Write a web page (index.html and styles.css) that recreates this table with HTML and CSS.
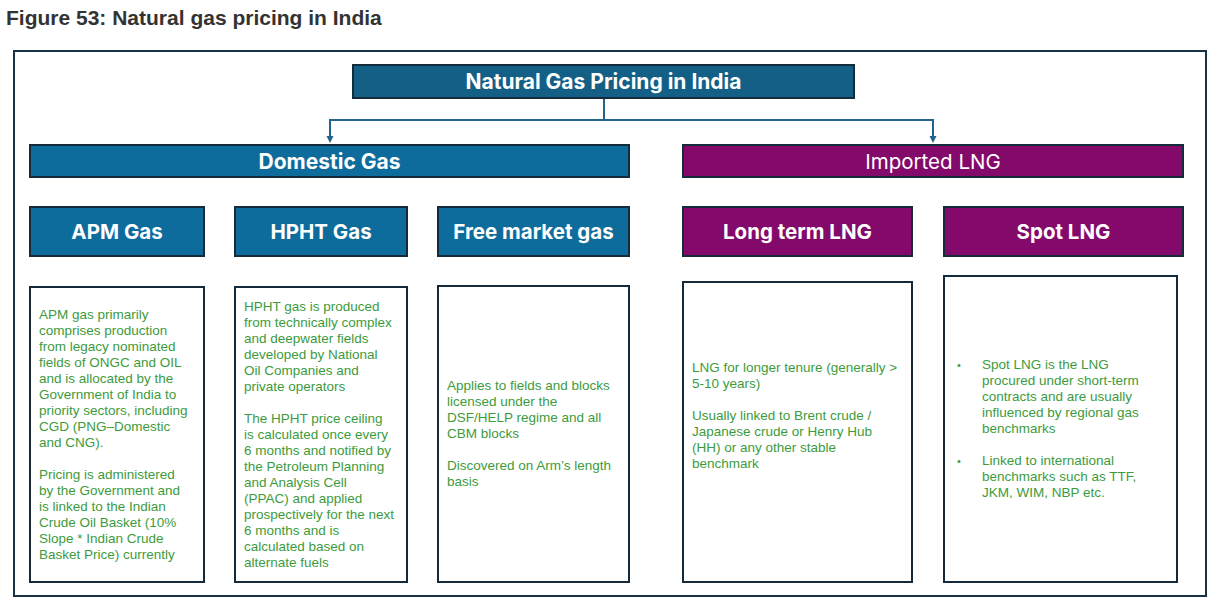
FILE: index.html
```html
<!DOCTYPE html>
<html lang="en">
<head>
<meta charset="utf-8">
<title>Figure 53: Natural gas pricing in India</title>
<link rel="stylesheet" href="styles.css">
</head>
<body>
<h1 class="page-title">Figure 53: Natural gas pricing in India</h1>
<div class="frame">
  <div class="root-row">
    <div class="root-box">Natural Gas Pricing in India</div>
  </div>
  <svg class="connector" width="1155" height="45" viewBox="0 0 1155 45">
    <g stroke="#22648c" stroke-width="2" fill="none">
      <line x1="575" y1="0" x2="575" y2="21"/>
      <line x1="300" y1="21" x2="905" y2="21"/>
      <line x1="301" y1="21" x2="301" y2="39"/>
      <line x1="904" y1="21" x2="904" y2="39"/>
    </g>
    <g fill="#22648c">
      <polygon points="297.5,37 304.5,37 301,44"/>
      <polygon points="900.5,37 907.5,37 904,44"/>
    </g>
  </svg>
  <div class="groups">
    <section class="group group-domestic">
      <div class="bar bar-blue">Domestic Gas</div>
      <div class="cards">
        <div class="card card-apm">
          <div class="head head-blue">APM Gas</div>
          <div class="body body-297">
            <p>APM gas primarily<br>comprises production<br>from legacy nominated<br>fields of ONGC and OIL<br>and is allocated by the<br>Government of India to<br>priority sectors, including<br>CGD (PNG–Domestic<br>and CNG).</p>
            <p>Pricing is administered<br>by the Government and<br>is linked to the Indian<br>Crude Oil Basket (10%<br>Slope * Indian Crude<br>Basket Price) currently</p>
          </div>
        </div>
        <div class="card card-hpht">
          <div class="head head-blue">HPHT Gas</div>
          <div class="body body-297">
            <p>HPHT gas is produced<br>from technically complex<br>and deepwater fields<br>developed by National<br>Oil Companies and<br>private operators</p>
            <p>The HPHT price ceiling<br>is calculated once every<br>6 months and notified by<br>the Petroleum Planning<br>and Analysis Cell<br>(PPAC) and applied<br>prospectively for the next<br>6 months and is<br>calculated based on<br>alternate fuels</p>
          </div>
        </div>
        <div class="card card-free">
          <div class="head head-blue">Free market gas</div>
          <div class="body body-298">
            <p>Applies to fields and blocks<br>licensed under the<br>DSF/HELP regime and all<br>CBM blocks</p>
            <p>Discovered on Arm’s length<br>basis</p>
          </div>
        </div>
      </div>
    </section>
    <section class="group group-imported">
      <div class="bar bar-purple bar-light">Imported LNG</div>
      <div class="cards">
        <div class="card card-long">
          <div class="head head-purple">Long term LNG</div>
          <div class="body body-302 body-raised">
            <p>LNG for longer tenure (generally &gt;<br>5-10 years)</p>
            <p>Usually linked to Brent crude /<br>Japanese crude or Henry Hub<br>(HH) or any other stable<br>benchmark</p>
          </div>
        </div>
        <div class="card card-spot">
          <div class="head head-purple">Spot LNG</div>
          <div class="body body-308 body-narrow">
            <ul class="bullets">
              <li><span class="dot">•</span><span>Spot LNG is the LNG<br>procured under short-term<br>contracts and are usually<br>influenced by regional gas<br>benchmarks</span></li>
              <li><span class="dot">•</span><span>Linked to international<br>benchmarks such as TTF,<br>JKM, WIM, NBP etc.</span></li>
            </ul>
          </div>
        </div>
      </div>
    </section>
  </div>
</div>
</body>
</html>
```
FILE: styles.css
```css
* { box-sizing: border-box; }
html, body { margin: 0; padding: 0; background: #ffffff; }
body { width: 1220px; height: 607px; overflow: hidden; font-family: "Liberation Sans", Arial, sans-serif; }

.page-title {
  margin: 0;
  height: 50px;
  padding: 6px 0 0 6px;
  font-family: "Liberation Sans", Arial, sans-serif;
  font-size: 21px;
  line-height: 24px;
  font-weight: 700;
  color: #333333;
}

.frame {
  margin: 0 13px;
  height: 547px;
  border: 2px solid #163244;
  padding: 12px 21px 12px 14px;
  display: flex;
  flex-direction: column;
}

.root-row { display: flex; height: 35px; }
.root-box {
  margin-left: 323px;
  width: 503px;
  height: 35px;
  background: #135f86;
  border: 2px solid #152a3a;
  color: #fff;
  font-family: Inter, "Open Sans", sans-serif;
  font-weight: 700;
  font-size: 21px;
  display: flex;
  align-items: center;
  justify-content: center;
}

.connector { display: block; flex: none; }

.groups { display: flex; gap: 52px; height: 439px; }
.group { display: flex; flex-direction: column; }
.group-domestic { width: 601px; }
.group-imported { width: 502px; }

.bar {
  height: 34px;
  color: #fff;
  border: 2px solid #152a3a;
  font-family: Inter, "Open Sans", sans-serif;
  font-weight: 700;
  font-size: 21px;
  display: flex;
  align-items: center;
  justify-content: center;
}
.bar-blue { background: #0e6c9d; }
.bar-purple { background: #830a6b; }
.bar-light { font-weight: 400; font-size: 20.5px; }

.cards { display: flex; gap: 29px; margin-top: 28px; height: 377px; }
.group-imported .cards { gap: 30px; }

.card { display: flex; flex-direction: column; justify-content: space-between; }
.card-apm { width: 176px; }
.card-hpht { width: 174px; }
.card-free { width: 193px; }
.card-long { width: 231px; }
.card-spot { width: 241px; }

.head {
  height: 51px;
  border: 2px solid #152a3a;
  color: #fff;
  font-family: Inter, "Open Sans", sans-serif;
  font-weight: 700;
  font-size: 20.5px;
  display: flex;
  align-items: center;
  justify-content: center;
}
.head-blue { background: #0e6c9d; }
.head-purple { background: #830a6b; }

.body {
  border: 2px solid #14293a;
  padding: 0 6px 0 8px;
  display: flex;
  flex-direction: column;
  justify-content: center;
  font-family: "Liberation Sans", Arial, sans-serif;
  font-size: 13.5px;
  line-height: 16px;
  color: #3d9b3d;
  white-space: nowrap;
}
.body p { margin: 0; }
.body p + p { margin-top: 16px; }
.body-297 { height: 297px; }
.body-298 { height: 298px; }
.body-302 { height: 302px; }
.body-308 { height: 308px; }
.body-raised { padding-bottom: 32px; }
.body-narrow { width: 235px; }

.bullets { list-style: none; margin: 0; padding: 0 0 0 4px; }
.bullets li { display: flex; }
.bullets li + li { margin-top: 16px; }
.dot { width: 25px; flex: none; font-size: 11px; }
```
